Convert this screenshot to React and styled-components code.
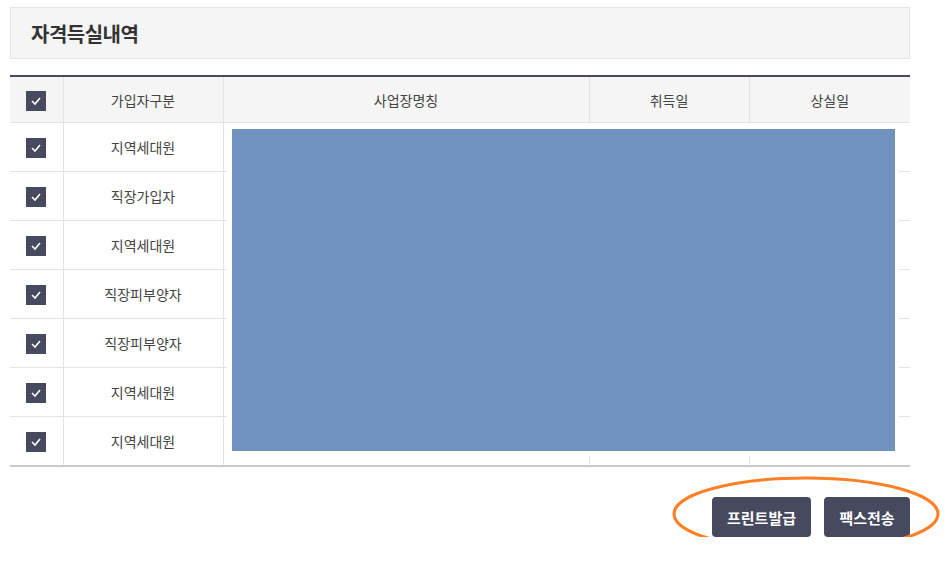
import React from "react";
import styled, { createGlobalStyle } from "styled-components";

const GlobalStyle = createGlobalStyle`
  body {
    margin: 0;
    background: #fff;
    font-family: "Noto Sans CJK KR", "Noto Sans", sans-serif;
    color: #444;
  }
`;

const Page = styled.div`
  position: relative;
  width: 900px;
  padding: 7px 0 0 10px;
`;

const TitleBox = styled.div`
  height: 50px;
  display: flex;
  align-items: center;
  padding-left: 20px;
  background: #f5f5f5;
  border: 1px solid #e5e5e5;
  font-size: 20px;
  font-weight: 700;
  color: #333;
  letter-spacing: -0.5px;
`;

const TableWrap = styled.div`
  position: relative;
  margin-top: 16px;
`;

const Table = styled.table`
  width: 900px;
  border-collapse: collapse;
  table-layout: fixed;
  border-top: 2px solid #474a5e;
  border-bottom: 2px solid #c8c9cc;
  font-size: 14px;
`;

const Th = styled.th`
  height: 45px;
  padding: 0;
  background: #f5f5f5;
  font-weight: 400;
  color: #444;
  border-left: 1px solid #e3e3e6;
  border-bottom: 1px solid #e3e3e6;
  &:first-child {
    border-left: none;
  }
`;

const Td = styled.td`
  height: 48px;
  padding: 0;
  text-align: center;
  border-left: 1px solid #e3e3e6;
  border-bottom: 1px solid #e3e3e6;
  &:first-child {
    border-left: none;
  }
  tr:last-child > & {
    border-bottom: none;
  }
`;

const Check = styled.span`
  display: inline-flex;
  align-items: center;
  justify-content: center;
  width: 20px;
  height: 20px;
  background: #474a5e;
  vertical-align: middle;
`;

const Redact = styled.div`
  position: absolute;
  left: 217px;
  top: 49px;
  width: 663px;
  height: 322px;
  padding: 5px 4px 4px 5px;
  background: #fff;
  &::after {
    content: "";
    display: block;
    width: 100%;
    height: 100%;
    background: #7092bf;
  }
`;

const ButtonRow = styled.div`
  display: flex;
  justify-content: flex-end;
  gap: 13px;
  margin-top: 30px;
`;

const Button = styled.button`
  width: ${(p) => p.$w}px;
  height: 40px;
  padding: 0;
  border: none;
  border-radius: 4px;
  background: #474a5e;
  color: #fff;
  font-family: inherit;
  font-size: 15px;
  font-weight: 700;
`;

const Ring = styled.svg`
  position: absolute;
  left: 672px;
  top: 476px;
  overflow: visible;
`;

const CheckBox = () => (
  <Check>
    <svg width="12" height="10" viewBox="0 0 12 10">
      <path d="M2 5 L5 8 L10 2" fill="none" stroke="#fff" strokeWidth="1.6" />
    </svg>
  </Check>
);

const rows = ["지역세대원", "직장가입자", "지역세대원", "직장피부양자", "직장피부양자", "지역세대원", "지역세대원"];

export default function App() {
  return (
    <Page>
      <GlobalStyle />
      <TitleBox>자격득실내역</TitleBox>
      <TableWrap>
        <Table>
          <colgroup>
            <col style={{ width: 53 }} />
            <col style={{ width: 160 }} />
            <col style={{ width: 366 }} />
            <col style={{ width: 160 }} />
            <col style={{ width: 161 }} />
          </colgroup>
          <thead>
            <tr>
              <Th><CheckBox /></Th>
              <Th>가입자구분</Th>
              <Th>사업장명칭</Th>
              <Th>취득일</Th>
              <Th>상실일</Th>
            </tr>
          </thead>
          <tbody>
            {rows.map((r, i) => (
              <tr key={i}>
                <Td><CheckBox /></Td>
                <Td>{r}</Td>
                <Td />
                <Td />
                <Td />
              </tr>
            ))}
          </tbody>
        </Table>
        <Redact />
      </TableWrap>
      <ButtonRow>
        <Button $w={99}>프린트발급</Button>
        <Button $w={86}>팩스전송</Button>
      </ButtonRow>
      <Ring width="268" height="74">
        <ellipse cx="134" cy="38" rx="132" ry="36" fill="none" stroke="#ff7f27" strokeWidth="3" />
      </Ring>
    </Page>
  );
}
